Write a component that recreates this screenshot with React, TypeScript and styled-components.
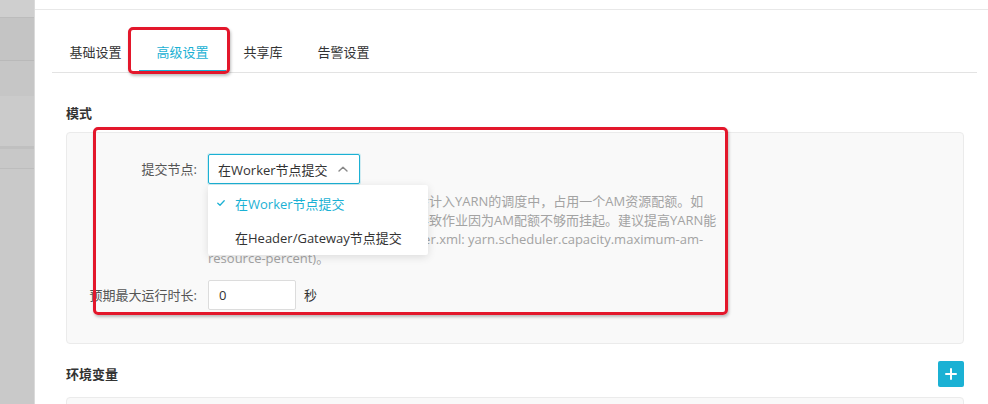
import React from 'react';
import styled, { createGlobalStyle } from 'styled-components';

const PRIMARY = '#1bb1d4';

const GlobalStyle = createGlobalStyle`
  html, body { margin: 0; padding: 0; background: #fff; }
  body {
    font-family: "Open Sans", "Noto Sans CJK SC", sans-serif;
    font-size: 13px;
    color: #333;
  }
  * { box-sizing: border-box; }
`;

const Page = styled.div`
  position: relative;
  width: 988px;
  height: 404px;
  overflow: hidden;
  display: flex;
  background: #fff;
`;

const Sidebar = styled.aside`
  width: 35px;
  flex: none;
  display: flex;
  flex-direction: column;
  background: #c9c9c9;
  border-right: 1px solid #dadada;
`;

const SideBlock = styled.div<{ $h?: number; $bg: string; $line?: string }>`
  height: ${(p) => (p.$h ? `${p.$h + (p.$line ? 1 : 0)}px` : 'auto')};
  flex: ${(p) => (p.$h ? 'none' : '1')};
  background: ${(p) => p.$bg};
  ${(p) => (p.$line ? `border-bottom: 1px solid ${p.$line};` : '')}
`;

const Main = styled.main`
  flex: 1;
  min-width: 0;
  display: flex;
  flex-direction: column;
`;

const TopRule = styled.div`
  height: 10px;
  flex: none;
  border-bottom: 1px solid #e8e8e8;
`;

const TabBar = styled.nav`
  display: flex;
  margin: 23px 11px 0 17px;
  border-bottom: 1px solid #e3e3e3;
`;

const Tab = styled.div<{ $active?: boolean }>`
  height: 39px;
  line-height: 39px;
  padding: 0 17.5px;
  font-size: 13px;
  color: ${(p) => (p.$active ? PRIMARY : '#333')};
  box-shadow: ${(p) => (p.$active ? `inset 0 -2px 0 ${PRIMARY}` : 'none')};
`;

const Section = styled.section`
  padding: 0 24px 0 31px;
`;

const SectionHeader = styled.div<{ $mt: number; $h: number }>`
  display: flex;
  align-items: center;
  justify-content: space-between;
  margin-top: ${(p) => p.$mt}px;
  height: ${(p) => p.$h}px;
`;

const SectionTitle = styled.h3`
  margin: 0;
  font-size: 13px;
  font-weight: 700;
  color: #333;
  line-height: 20px;
`;

const Panel = styled.div<{ $mt: number; $minH?: number }>`
  margin-top: ${(p) => p.$mt}px;
  background: #f9f9f9;
  border: 1px solid #ebebeb;
  border-radius: 4px;
  padding: 21px 0 33px;
  ${(p) => (p.$minH ? `min-height: ${p.$minH}px;` : '')}
`;

const FormRow = styled.div<{ $mt?: number }>`
  display: flex;
  align-items: flex-start;
  gap: 11px;
  margin-top: ${(p) => p.$mt ?? 0}px;
`;

const Label = styled.label`
  width: 130px;
  flex: none;
  text-align: right;
  line-height: 30px;
  color: #555;
  font-size: 13px;
`;

const FieldCol = styled.div`
  display: flex;
  flex-direction: column;
`;

const SelectWrap = styled.div`
  position: relative;
  width: 152px;
`;

const SelectBox = styled.div`
  height: 30px;
  border: 1px solid ${PRIMARY};
  border-radius: 2px;
  background: #fff;
  display: flex;
  align-items: center;
  justify-content: space-between;
  padding: 0 11px 0 9px;
  color: #333;
  box-shadow: 0 0 0 1px rgba(27, 177, 212, 0.18);
`;

const Dropdown = styled.ul`
  position: absolute;
  top: calc(100% + 1px);
  left: 0;
  width: 220px;
  margin: 0;
  padding: 1px 0;
  list-style: none;
  background: #fff;
  border-radius: 2px;
  box-shadow: 0 2px 8px rgba(0, 0, 0, 0.12);
  z-index: 2;
`;

const Option = styled.li<{ $selected?: boolean }>`
  height: 34px;
  display: flex;
  align-items: center;
  padding-left: 9px;
  color: ${(p) => (p.$selected ? PRIMARY : '#333')};
  white-space: nowrap;
`;

const CheckSlot = styled.span`
  width: 18px;
  display: flex;
  align-items: center;
`;

const Help = styled.p`
  margin: 8px 0 0;
  color: #a3a3a3;
  line-height: 19px;
  font-size: 13px;
  white-space: nowrap;
`;

const InputRow = styled.div`
  display: flex;
  align-items: center;
  gap: 8px;
`;

const NumberInput = styled.input`
  width: 88px;
  height: 30px;
  border: 1px solid #dcdcdc;
  border-radius: 2px;
  background: #fff;
  padding: 0 10px;
  font: inherit;
  font-size: 13px;
  color: #333;
  outline: none;
`;

const Unit = styled.span`
  color: #333;
  line-height: 30px;
`;

const AddButton = styled.button`
  width: 26px;
  height: 26px;
  padding: 0;
  border: none;
  border-radius: 2px;
  background: ${PRIMARY};
  display: flex;
  align-items: center;
  justify-content: center;
`;

const Annotation = styled.div<{ $x: number; $y: number; $w: number; $h: number }>`
  position: absolute;
  left: ${(p) => p.$x}px;
  top: ${(p) => p.$y}px;
  width: ${(p) => p.$w}px;
  height: ${(p) => p.$h}px;
  border: 3px solid #e3172b;
  border-radius: 5px;
  box-shadow: 1px 2px 3px rgba(0, 0, 0, 0.25);
  pointer-events: none;
  z-index: 5;
`;

const ChevronUp = () => (
  <svg width="10" height="6" viewBox="0 0 10 6" fill="none">
    <polyline points="1,5 5,1.2 9,5" stroke="#888" strokeWidth="1.4" strokeLinecap="round" strokeLinejoin="round" />
  </svg>
);

const Check = () => (
  <svg width="8" height="6" viewBox="0 0 8 6" fill="none">
    <polyline points="0.8,3.2 3,5.2 7.2,0.8" stroke={PRIMARY} strokeWidth="1.3" strokeLinecap="round" strokeLinejoin="round" />
  </svg>
);

const Plus = () => (
  <svg width="12" height="12" viewBox="0 0 12 12" fill="none">
    <path d="M6 1v10M1 6h10" stroke="#fff" strokeWidth="2" strokeLinecap="round" />
  </svg>
);

const tabs = ['基础设置', '高级设置', '共享库', '告警设置'];

export default function App() {
  return (
    <>
      <GlobalStyle />
      <Page>
        <Sidebar>
          <SideBlock $h={17} $bg="#cfcfcf" $line="#bcbcbc" />
          <SideBlock $h={42} $bg="#c4c4c4" $line="#b9b9b9" />
          <SideBlock $h={35} $bg="#c6c6c6" />
          <SideBlock $h={50} $bg="#cbcbcb" />
          <SideBlock $h={3} $bg="#c0c0c0" />
          <SideBlock $h={19} $bg="#c8c8c8" $line="#bdbdbd" />
          <SideBlock $bg="#c9c9c9" />
        </Sidebar>
        <Main>
          <TopRule />
          <TabBar>
            {tabs.map((t) => (
              <Tab key={t} $active={t === '高级设置'}>
                {t}
              </Tab>
            ))}
          </TabBar>

          <Section>
            <SectionHeader $mt={30} $h={20}>
              <SectionTitle>模式</SectionTitle>
            </SectionHeader>
            <Panel $mt={9}>
              <FormRow>
                <Label>提交节点:</Label>
                <FieldCol>
                  <SelectWrap>
                    <SelectBox>
                      <span>在Worker节点提交</span>
                      <ChevronUp />
                    </SelectBox>
                    <Dropdown>
                      <Option $selected>
                        <CheckSlot>
                          <Check />
                        </CheckSlot>
                        在Worker节点提交
                      </Option>
                      <Option>
                        <CheckSlot />
                        在Header/Gateway节点提交
                      </Option>
                    </Dropdown>
                  </SelectWrap>
                  <Help>
                    选择该模式时，作业的应用主控进程会计入YARN的调度中，占用一个AM资源配额。如
                    <br />
                    果集群同时提交了大量的作业，可能导致作业因为AM配额不够而挂起。建议提高YARN能
                    <br />
                    够分配给AM的比例(capacity-scheduler.xml: yarn.scheduler.capacity.maximum-am-
                    <br />
                    resource-percent)。
                  </Help>
                </FieldCol>
              </FormRow>
              <FormRow $mt={12}>
                <Label>预期最大运行时长:</Label>
                <InputRow>
                  <NumberInput value="0" readOnly />
                  <Unit>秒</Unit>
                </InputRow>
              </FormRow>
            </Panel>
          </Section>

          <Section>
            <SectionHeader $mt={17} $h={26}>
              <SectionTitle>环境变量</SectionTitle>
              <AddButton aria-label="add">
                <Plus />
              </AddButton>
            </SectionHeader>
            <Panel $mt={10} $minH={80} />
          </Section>
        </Main>

        <Annotation $x={128} $y={27} $w={102} $h={47} />
        <Annotation $x={93} $y={127} $w={635} $h={188} />
      </Page>
    </>
  );
}
